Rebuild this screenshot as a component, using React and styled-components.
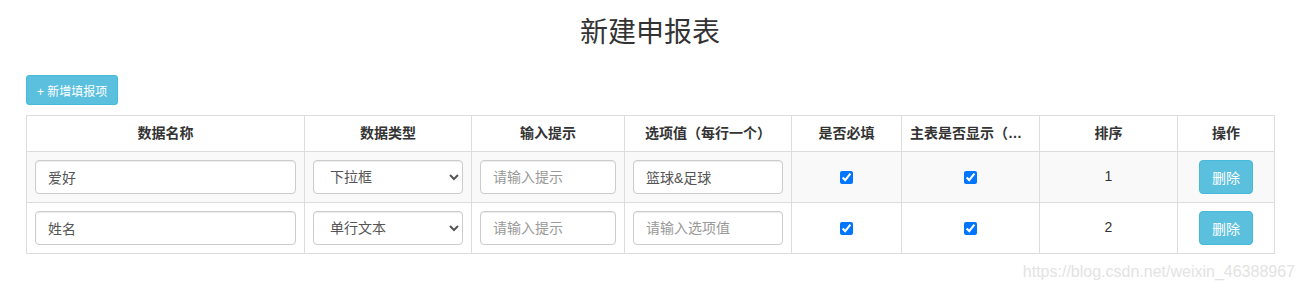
import React from "react";
import styled, { createGlobalStyle } from "styled-components";

const GlobalStyle = createGlobalStyle`
  html, body {
    margin: 0;
    padding: 0;
    background: #fff;
  }
  body {
    font-family: "Liberation Sans", "Noto Sans CJK SC", sans-serif;
    font-size: 14px;
    line-height: 1.42857;
    color: #333;
  }
  * {
    box-sizing: border-box;
  }
`;

const columns = [
  { title: "数据名称", width: 278 },
  { title: "数据类型", width: 167 },
  { title: "输入提示", width: 153 },
  { title: "选项值（每行一个）", width: 167 },
  { title: "是否必填", width: 110 },
  { title: "主表是否显示（列表）", width: 138 },
  { title: "排序", width: 138 },
  { title: "操作", width: 97 },
];

const rows = [
  { name: "爱好", type: "下拉框", options: "篮球&足球", sort: 1 },
  { name: "姓名", type: "单行文本", options: "", sort: 2 },
];

const typeOptions = ["单行文本", "多行文本", "下拉框", "单选框", "复选框", "日期"];

const Page = styled.div`
  position: relative;
  width: 1305px;
  height: 291px;
  padding: 0 31px 0 26px;
`;

const Title = styled.h3`
  margin: 0;
  padding-top: 13px;
  height: 75px;
  text-align: center;
  font-size: 28px;
  font-weight: 400;
  line-height: 40px;
  color: #333;
`;

const Toolbar = styled.div`
  display: flex;
  height: 40px;
`;

const InfoButton = styled.button`
  display: inline-flex;
  align-items: center;
  justify-content: center;
  height: ${(p) => (p.$small ? "30px" : "34px")};
  padding: ${(p) => (p.$small ? "0 10px" : "0 12px")};
  font-family: inherit;
  font-size: ${(p) => (p.$small ? "12px" : "14px")};
  color: #fff;
  background: #5bc0de;
  border: 1px solid #46b8da;
  border-radius: ${(p) => (p.$small ? "3px" : "4px")};
  cursor: pointer;
`;

const Table = styled.table`
  width: 1248px;
  table-layout: fixed;
  border-collapse: collapse;
  border: 1px solid #ddd;
`;

const HeadCell = styled.th`
  height: 36px;
  padding: 0 8px;
  border: 1px solid #ddd;
  font-size: 14px;
  font-weight: 700;
  text-align: center;
  white-space: nowrap;
  overflow: hidden;
  text-overflow: ellipsis;
  color: #333;
`;

const Row = styled.tr`
  background: ${(p) => (p.$striped ? "#f9f9f9" : "#fff")};
`;

const Cell = styled.td`
  height: 51px;
  padding: 0 8px;
  border: 1px solid #ddd;
  vertical-align: middle;
  text-align: ${(p) => (p.$center ? "center" : "left")};
`;

const TextInput = styled.input`
  display: block;
  width: 100%;
  height: 34px;
  padding: 6px 12px;
  font-family: inherit;
  font-size: 14px;
  color: #555;
  background: #fff;
  border: 1px solid #ccc;
  border-radius: 4px;
  box-shadow: inset 0 1px 1px rgba(0, 0, 0, 0.075);
  outline: none;

  &::placeholder {
    color: #999;
  }
`;

const Select = styled.select`
  display: block;
  width: 100%;
  height: 34px;
  padding: 6px 8px 6px 12px;
  font-family: inherit;
  font-size: 14px;
  color: #555;
  background: #fff;
  border: 1px solid #ccc;
  border-radius: 4px;
  box-shadow: inset 0 1px 1px rgba(0, 0, 0, 0.075);
  outline: none;
`;

const Check = styled.input`
  width: 13px;
  height: 13px;
  margin: 0;
  vertical-align: middle;
`;

const Watermark = styled.div`
  position: absolute;
  right: 10px;
  top: 262px;
  font-family: "Liberation Sans", sans-serif;
  font-size: 16px;
  line-height: 20px;
  color: #e3e3e3;
  pointer-events: none;
`;

export default function App() {
  return (
    <>
      <GlobalStyle />
      <Page>
        <Title>新建申报表</Title>
        <Toolbar>
          <InfoButton $small>+ 新增填报项</InfoButton>
        </Toolbar>
        <Table>
          <colgroup>
            {columns.map((c) => (
              <col key={c.title} style={{ width: c.width }} />
            ))}
          </colgroup>
          <thead>
            <tr>
              {columns.map((c) => (
                <HeadCell key={c.title}>{c.title}</HeadCell>
              ))}
            </tr>
          </thead>
          <tbody>
            {rows.map((r, i) => (
              <Row key={r.sort} $striped={i % 2 === 0}>
                <Cell>
                  <TextInput defaultValue={r.name} />
                </Cell>
                <Cell>
                  <Select defaultValue={r.type}>
                    {typeOptions.map((o) => (
                      <option key={o}>{o}</option>
                    ))}
                  </Select>
                </Cell>
                <Cell>
                  <TextInput placeholder="请输入提示" />
                </Cell>
                <Cell>
                  <TextInput defaultValue={r.options} placeholder="请输入选项值" />
                </Cell>
                <Cell $center>
                  <Check type="checkbox" defaultChecked />
                </Cell>
                <Cell $center>
                  <Check type="checkbox" defaultChecked />
                </Cell>
                <Cell $center>{r.sort}</Cell>
                <Cell $center>
                  <InfoButton>删除</InfoButton>
                </Cell>
              </Row>
            ))}
          </tbody>
        </Table>
        <Watermark>https://blog.csdn.net/weixin_46388967</Watermark>
      </Page>
    </>
  );
}
